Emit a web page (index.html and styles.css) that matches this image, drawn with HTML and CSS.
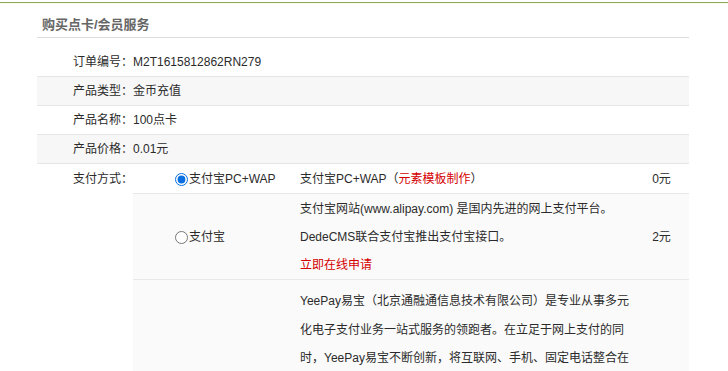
FILE: index.html
```html
<!DOCTYPE html>
<html lang="zh-CN">
<head>
  <meta charset="UTF-8">
  <title>购买点卡/会员服务</title>
  <link rel="stylesheet" href="styles.css">
</head>
<body>
  <div class="topline"></div>

  <div class="panel">
    <h2 class="panel-title">购买点卡/会员服务</h2>

    <div class="info">
      <div class="info-row first">
        <span class="info-label">订单编号：</span>
        <span class="info-value">M2T1615812862RN279</span>
      </div>
      <div class="info-row alt">
        <span class="info-label">产品类型：</span>
        <span class="info-value">金币充值</span>
      </div>
      <div class="info-row">
        <span class="info-label">产品名称：</span>
        <span class="info-value">100点卡</span>
      </div>
      <div class="info-row alt">
        <span class="info-label">产品价格：</span>
        <span class="info-value">0.01元</span>
      </div>

      <!-- 支付方式 -->
      <div class="info-row pay-row">
        <span class="info-label">支付方式：</span>
        <div class="pay-list">
          <div class="pay-item">
            <label class="pay-name"><input type="radio" name="paytype" checked>支付宝PC+WAP</label>
            <div class="pay-desc">支付宝PC+WAP（<span class="red">元素模板制作</span>）</div>
            <div class="pay-fee">0元</div>
          </div>
          <div class="pay-item shade">
            <label class="pay-name"><input type="radio" name="paytype">支付宝</label>
            <div class="pay-desc">
              支付宝网站(www.alipay.com) 是国内先进的网上支付平台。<br>
              DedeCMS联合支付宝推出支付宝接口。<br>
              <a class="red" href="#">立即在线申请</a>
            </div>
            <div class="pay-fee">2元</div>
          </div>
          <div class="pay-item shade">
            <label class="pay-name"></label>
            <div class="pay-desc long">YeePay易宝（北京通融通信息技术有限公司）是专业从事多元化电子支付业务一站式服务的领跑者。在立足于网上支付的同时，YeePay易宝不断创新，将互联网、手机、固定电话整合在一个平台上。</div>
            <div class="pay-fee"></div>
          </div>
        </div>
      </div>
    </div>
  </div>
</body>
</html>
```

FILE: styles.css
```css
body {
  margin: 0;
  font-family: "Liberation Sans", "Noto Sans CJK SC", sans-serif;
  font-size: 12px;
  color: #2b2b2b;
  background: #fff;
}

.topline {
  margin-top: 2px;
  border-top: 1px solid #8da85a;
  height: 1px;
  background: #fbfcef;
}

.panel {
  width: 652px;
  margin-left: 37px;
}

.panel-title {
  margin: 0;
  padding: 10px 0 0 5px;
  height: 23px;
  line-height: 22px;
  font-size: 13px;
  font-weight: bold;
  color: #666;
  border-bottom: 1px solid #ddd;
}

/* 订单信息 */
.info-row {
  display: grid;
  grid-template-columns: 96px 1fr;
  line-height: 28px;
  border-top: 1px solid #e6e6e6;
}

.info-row.first {
  border-top: none;
  padding-top: 10px;
}

.info-row.alt {
  background: #f7f7f7;
}

.info-label {
  padding-left: 36px;
}

/* 支付方式 */
.pay-row .info-label {
  padding-top: 1px;
}

.pay-item {
  display: grid;
  grid-template-columns: 167px 334px 1fr;
  padding: 1px 0 0;
  border-top: 1px solid #e8e8e8;
}

.pay-item:first-child {
  border-top: none;
}

.pay-item.shade {
  background: #fafafa;
}

.pay-name {
  display: flex;
  align-items: center;
  padding-left: 42px;
}

.pay-name input {
  width: 13px;
  height: 13px;
  margin: 0 1px 0 0;
  accent-color: #0a6fe0;
}

.pay-desc {
  line-height: 28px;
}

.pay-desc.long {
  padding-top: 6px;
  line-height: 28.5px;
}

.pay-fee {
  display: flex;
  align-items: center;
  justify-content: center;
}

.red {
  color: #d40000;
  text-decoration: none;
}
```
